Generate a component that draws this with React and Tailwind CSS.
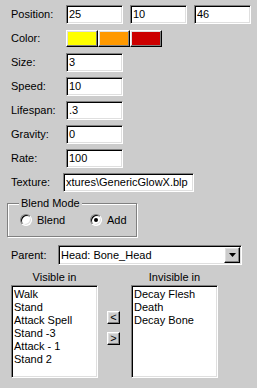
import React from "react";

const sunken =
  "bg-white border border-t-[#808080] border-l-[#808080] border-b-white border-r-white shadow-[inset_1px_1px_0_#000,inset_-1px_-1px_0_#dfdfdf]";
const raised =
  "border border-t-white border-l-white border-b-black border-r-black shadow-[inset_-1px_-1px_0_#808080,inset_1px_1px_0_#dfdfdf]";

function Input({ value, w = "w-[57px]" }) {
  return (
    <div className={`${sunken} ${w} h-[19px] flex items-center pl-[2px] overflow-hidden whitespace-nowrap`}>
      {value}
    </div>
  );
}

function Row({ label, children, lw = "w-[55px]" }) {
  return (
    <div className="h-[24px] flex items-center">
      <div className={`${lw} shrink-0`}>{label}</div>
      {children}
    </div>
  );
}

function Radio({ checked, label }) {
  return (
    <div className="flex items-center gap-[5px]">
      <div className="w-[12px] h-[12px] rounded-full bg-white border border-t-[#808080] border-l-[#808080] border-b-white border-r-white shadow-[inset_1px_1px_0_#000,inset_-1px_-1px_0_#dfdfdf] flex items-center justify-center">
        {checked && <div className="w-[4px] h-[4px] rounded-full bg-black" />}
      </div>
      <span>{label}</span>
    </div>
  );
}

function ListBox({ items }) {
  return (
    <div className={`${sunken} w-[87px] h-[93px] pl-[2px] pt-[2px] leading-[13px]`}>
      {items.map((t) => (
        <div key={t} className="whitespace-nowrap">{t}</div>
      ))}
    </div>
  );
}

export default function App() {
  return (
    <div
      className="w-[257px] h-[388px] bg-[#cccccc] text-black text-[11px] leading-[13px] overflow-hidden"
      style={{ fontFamily: '"Liberation Sans", Arial, sans-serif' }}
    >
      <div className="pl-[11px] pt-[2px]">
        <Row label="Position:">
          <div className="flex gap-[7px]">
            <Input value="25" />
            <Input value="10" />
            <Input value="46" />
          </div>
        </Row>
        <Row label="Color:">
          <div className="flex">
            <div className={`${raised} w-[32px] h-[17px] bg-[#ffff00]`} />
            <div className={`${raised} w-[32px] h-[17px] bg-[#ff9900]`} />
            <div className={`${raised} w-[32px] h-[17px] bg-[#cc0000]`} />
          </div>
        </Row>
        <Row label="Size:">
          <Input value="3" />
        </Row>
        <Row label="Speed:">
          <Input value="10" />
        </Row>
        <Row label="Lifespan:">
          <Input value=".3" />
        </Row>
        <Row label="Gravity:">
          <Input value="0" />
        </Row>
        <Row label="Rate:">
          <Input value="100" />
        </Row>
        <Row label="Texture:" lw="w-[52px]">
          <Input value="xtures\GenericGlowX.blp" w="w-[131px]" />
        </Row>
      </div>

      <div className="relative ml-[7px] mt-[9px] w-[130px] h-[34px] border border-[#808080] shadow-[1px_1px_0_#fff,inset_1px_1px_0_#fff] flex items-center pl-[12px]">
        <span className="absolute left-[11px] top-[-7px] bg-[#cccccc] px-[2px]">Blend Mode</span>
        <div className="w-[70px]">
          <Radio label="Blend" />
        </div>
        <Radio checked label="Add" />
      </div>

      <div className="pl-[11px] mt-[8px] flex items-center h-[20px]">
        <div className="w-[47px]">Parent:</div>
        <div className={`${sunken} w-[184px] h-[20px] flex items-center justify-between pl-[2px] pr-[1px]`}>
          <span>Head: Bone_Head</span>
          <div className={`${raised} w-[16px] h-[16px] bg-[#cccccc] flex items-center justify-center`}>
            <svg width="7" height="4" viewBox="0 0 7 4">
              <polygon points="0,0 7,0 3.5,4" fill="#000" />
            </svg>
          </div>
        </div>
      </div>

      <div className="pl-[11px] mt-[4px] flex">
        <div className="flex flex-col items-center">
          <div className="h-[16px] flex items-center">Visible in</div>
          <ListBox items={["Walk", "Stand", "Attack Spell", "Stand -3", "Attack - 1", "Stand 2"]} />
        </div>
        <div className="w-[33px] pt-[42px] pl-[9px] flex flex-col gap-[8px]">
          <div className={`${raised} w-[13px] h-[13px] bg-[#cccccc] flex items-center justify-center leading-none`}>&lt;</div>
          <div className={`${raised} w-[13px] h-[13px] bg-[#cccccc] flex items-center justify-center leading-none`}>&gt;</div>
        </div>
        <div className="flex flex-col items-center">
          <div className="h-[16px] flex items-center">Invisible in</div>
          <ListBox items={["Decay Flesh", "Death", "Decay Bone"]} />
        </div>
      </div>
    </div>
  );
}
